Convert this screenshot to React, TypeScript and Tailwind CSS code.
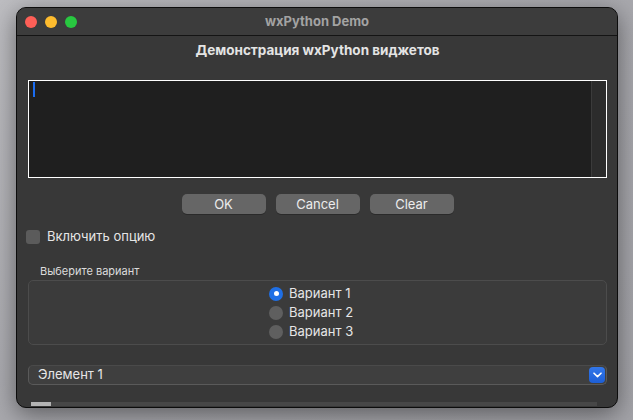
import React, { useState } from 'react';

const font = { fontFamily: 'Inter, "Liberation Sans", Arial, sans-serif' };

export default function App() {
  const [checked, setChecked] = useState(false);
  const [choice, setChoice] = useState(1);

  return (
    <div
      className="w-[633px] h-[420px] overflow-hidden bg-gradient-to-br from-[#bdbdc1] via-[#a8a8ad] to-[#a3a3a8] pt-[7px] pl-[16px]"
      style={font}
    >
      {/* window */}
      <div className="w-[602px] h-[401px] rounded-[10px] border border-[#0c0c0c] bg-[#383838] shadow-[0_6px_24px_rgba(0,0,0,0.45)] overflow-hidden flex flex-col">
        {/* title bar */}
        <div className="h-[28px] shrink-0 bg-[#3c3c3c] border-b border-[#141414] flex items-center relative">
          <div className="flex items-center gap-[8px] pl-[8px]">
            <span className="w-[12px] h-[12px] rounded-full bg-[#fe5f57]" />
            <span className="w-[12px] h-[12px] rounded-full bg-[#febc2e]" />
            <span className="w-[12px] h-[12px] rounded-full bg-[#28c840]" />
          </div>
          <div className="absolute inset-0 flex items-center justify-center text-[13px] font-bold text-[#a3a3a3] pointer-events-none">
            wxPython Demo
          </div>
        </div>

        {/* content */}
        <div className="flex-1 flex flex-col px-[11px] pr-[10px]">
          <div className="h-[16px] mt-[6px] text-center text-[13.5px] leading-[16px] font-bold text-[#e4e4e4]">
            Демонстрация wxPython виджетов
          </div>

          {/* text area */}
          <div className="mt-[22px] h-[98px] border border-white bg-[#1f1f1f] flex">
            <div className="flex-1 pl-[4px] pt-[1px]">
              <div className="w-[2px] h-[15px] bg-[#1a6cf0]" />
            </div>
            <div className="w-[15px] bg-[#2c2c2c] border-l border-[#3b3b3b]" />
          </div>

          {/* buttons */}
          <div className="mt-[16px] flex justify-center gap-[10px]">
            {['OK', 'Cancel', 'Clear'].map((b) => (
              <button
                key={b}
                type="button"
                className="w-[84px] h-[20px] rounded-[5px] bg-[#666666] text-[13px] leading-[20px] text-[#ececec] shadow-[0_1px_0_rgba(0,0,0,0.25)]"
              >
                {b}
              </button>
            ))}
          </div>

          {/* checkbox */}
          <label className="mt-[16px] flex items-center h-[14px] cursor-pointer" onClick={() => setChecked(!checked)}>
            <span
              className={`w-[14px] h-[14px] rounded-[3px] -ml-[2px] ${
                checked ? 'bg-[#1f6fe5]' : 'bg-[#5b5b5b]'
              } flex items-center justify-center text-white text-[10px]`}
            >
              {checked ? '✓' : ''}
            </span>
            <span className="ml-[7px] text-[13px] text-[#e6e6e6]">Включить опцию</span>
          </label>

          {/* radio group */}
          <div className="mt-[20px] pl-[12px] text-[11px] leading-[14px] text-[#dcdcdc]">Выберите вариант</div>
          <div className="mt-[2px] h-[65px] rounded-[5px] border border-[#4c4c4c] bg-[#3b3b3b] flex flex-col items-start justify-center gap-[5px] pl-[240px]">
            {[1, 2, 3].map((n) => (
              <div
                key={n}
                className="flex items-center h-[14px] cursor-pointer"
                onClick={() => setChoice(n)}
              >
                <span
                  className={`w-[14px] h-[14px] rounded-full flex items-center justify-center ${
                    choice === n ? 'bg-[#1f6fe5]' : 'bg-[#5f5f5f]'
                  }`}
                >
                  {choice === n && <span className="w-[5px] h-[5px] rounded-full bg-white" />}
                </span>
                <span className="ml-[6px] text-[13px] text-[#e6e6e6]">Вариант {n}</span>
              </div>
            ))}
          </div>

          {/* combo */}
          <div className="mt-[20px] h-[20px] rounded-[5px] border border-[#5a5a5a] border-t-[#4a4a4a] bg-[#3f3f3f] flex items-center">
            <span className="flex-1 pl-[9px] text-[13px] text-[#e6e6e6]">Элемент 1</span>
            <span className="w-[16px] h-[16px] mr-[1px] rounded-[4px] bg-gradient-to-b from-[#3277ea] to-[#1d5fd6] flex items-center justify-center">
              <svg width="9" height="6" viewBox="0 0 9 6" fill="none">
                <path d="M1 1.2 L4.5 4.6 L8 1.2" stroke="white" strokeWidth="1.6" strokeLinecap="round" strokeLinejoin="round" />
              </svg>
            </span>
          </div>

          {/* horizontal scrollbar */}
          <div className="mt-[17px] h-[4px] mr-[10px] ml-[3px] bg-[#474747] flex">
            <div className="w-[20px] h-full bg-[#b4b4b4]" />
          </div>
        </div>
      </div>
    </div>
  );
}
